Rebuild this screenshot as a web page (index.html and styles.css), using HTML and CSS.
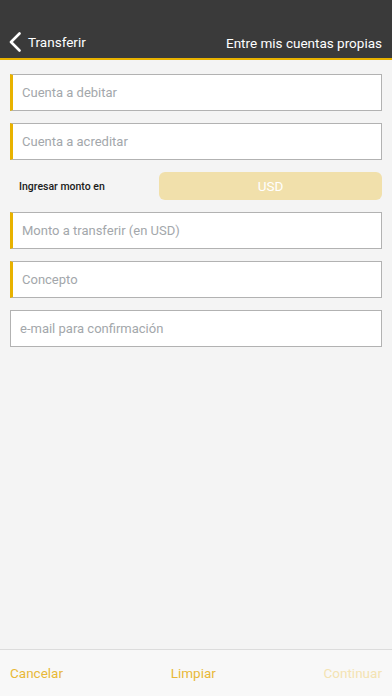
FILE: index.html
```html
<!DOCTYPE html>
<html lang="es">
<head>
    <meta charset="UTF-8">
    <meta name="viewport" content="width=device-width, initial-scale=1.0">
    <title>Transferir</title>
    <link rel="stylesheet" href="styles.css">
</head>
<body>
    <div class="app">
        <header class="top-bar">
            <a href="#" class="back-link">
                <svg class="back-icon" width="14" height="20" viewBox="0 0 14 20">
                    <path d="M11.5 1.5 L3 10 L11.5 18.5" fill="none" stroke="#fff" stroke-width="2.6" stroke-linecap="round" stroke-linejoin="round"/>
                </svg>
                <span>Transferir</span>
            </a>
            <span class="top-title">Entre mis cuentas propias</span>
        </header>

        <main class="form">
            <div class="field required">Cuenta a debitar</div>
            <div class="field required">Cuenta a acreditar</div>

            <div class="currency-row">
                <span class="currency-label">Ingresar monto en</span>
                <button class="currency-btn">USD</button>
            </div>

            <div class="field required">Monto a transferir (en USD)</div>
            <div class="field required">Concepto</div>
            <div class="field">e-mail para confirmación</div>
        </main>

        <footer class="bottom-bar">
            <a href="#" class="action">Cancelar</a>
            <a href="#" class="action">Limpiar</a>
            <a href="#" class="action disabled">Continuar</a>
        </footer>
    </div>
</body>
</html>
```

FILE: styles.css
```css
* {
    box-sizing: border-box;
    margin: 0;
    padding: 0;
    font-family: 'Roboto', 'Liberation Sans', sans-serif;
}

body {
    background-color: #f4f4f4;
}

.app {
    height: 696px;
    display: flex;
    flex-direction: column;
}

.top-bar {
    height: 60px;
    background-color: #3a3a3a;
    border-bottom: 2px solid #e8b200;
    display: flex;
    align-items: flex-end;
    justify-content: space-between;
    padding: 0 10px 6px 8px;
    color: #fff;
}

.back-link {
    display: flex;
    align-items: center;
    gap: 6px;
    color: #fff;
    text-decoration: none;
    font-size: 13.5px;
}

.back-icon {
    display: block;
}

.top-title {
    font-size: 13.5px;
    padding-bottom: 1px;
}

.form {
    flex: 1;
    padding: 14px 10px 0;
    display: flex;
    flex-direction: column;
    gap: 12px;
}

.field {
    height: 37px;
    background: #fff;
    border: 1px solid #b2b2b2;
    display: flex;
    align-items: center;
    padding-left: 9px;
    font-size: 13px;
    color: #a3a7ab;
}

.field.required {
    border-left: 3px solid #e8b200;
}

.currency-row {
    display: flex;
    align-items: center;
    justify-content: space-between;
}

.currency-label {
    font-size: 10.5px;
    font-weight: 500;
    color: #1a1a1a;
    padding-left: 9px;
}

.currency-btn {
    width: 223px;
    height: 28px;
    border: none;
    border-radius: 6px;
    background: #f1e0ab;
    color: #fff;
    font-size: 13.5px;
}

.bottom-bar {
    height: 47px;
    border-top: 1px solid #dcdcdc;
    background: #f8f8f8;
    display: flex;
    align-items: center;
    justify-content: space-between;
    padding: 0 10px 0 10px;
}

.action {
    color: #e8b838;
    text-decoration: none;
    font-size: 13.5px;
}

.action.disabled {
    color: #f4e3b2;
}
```
